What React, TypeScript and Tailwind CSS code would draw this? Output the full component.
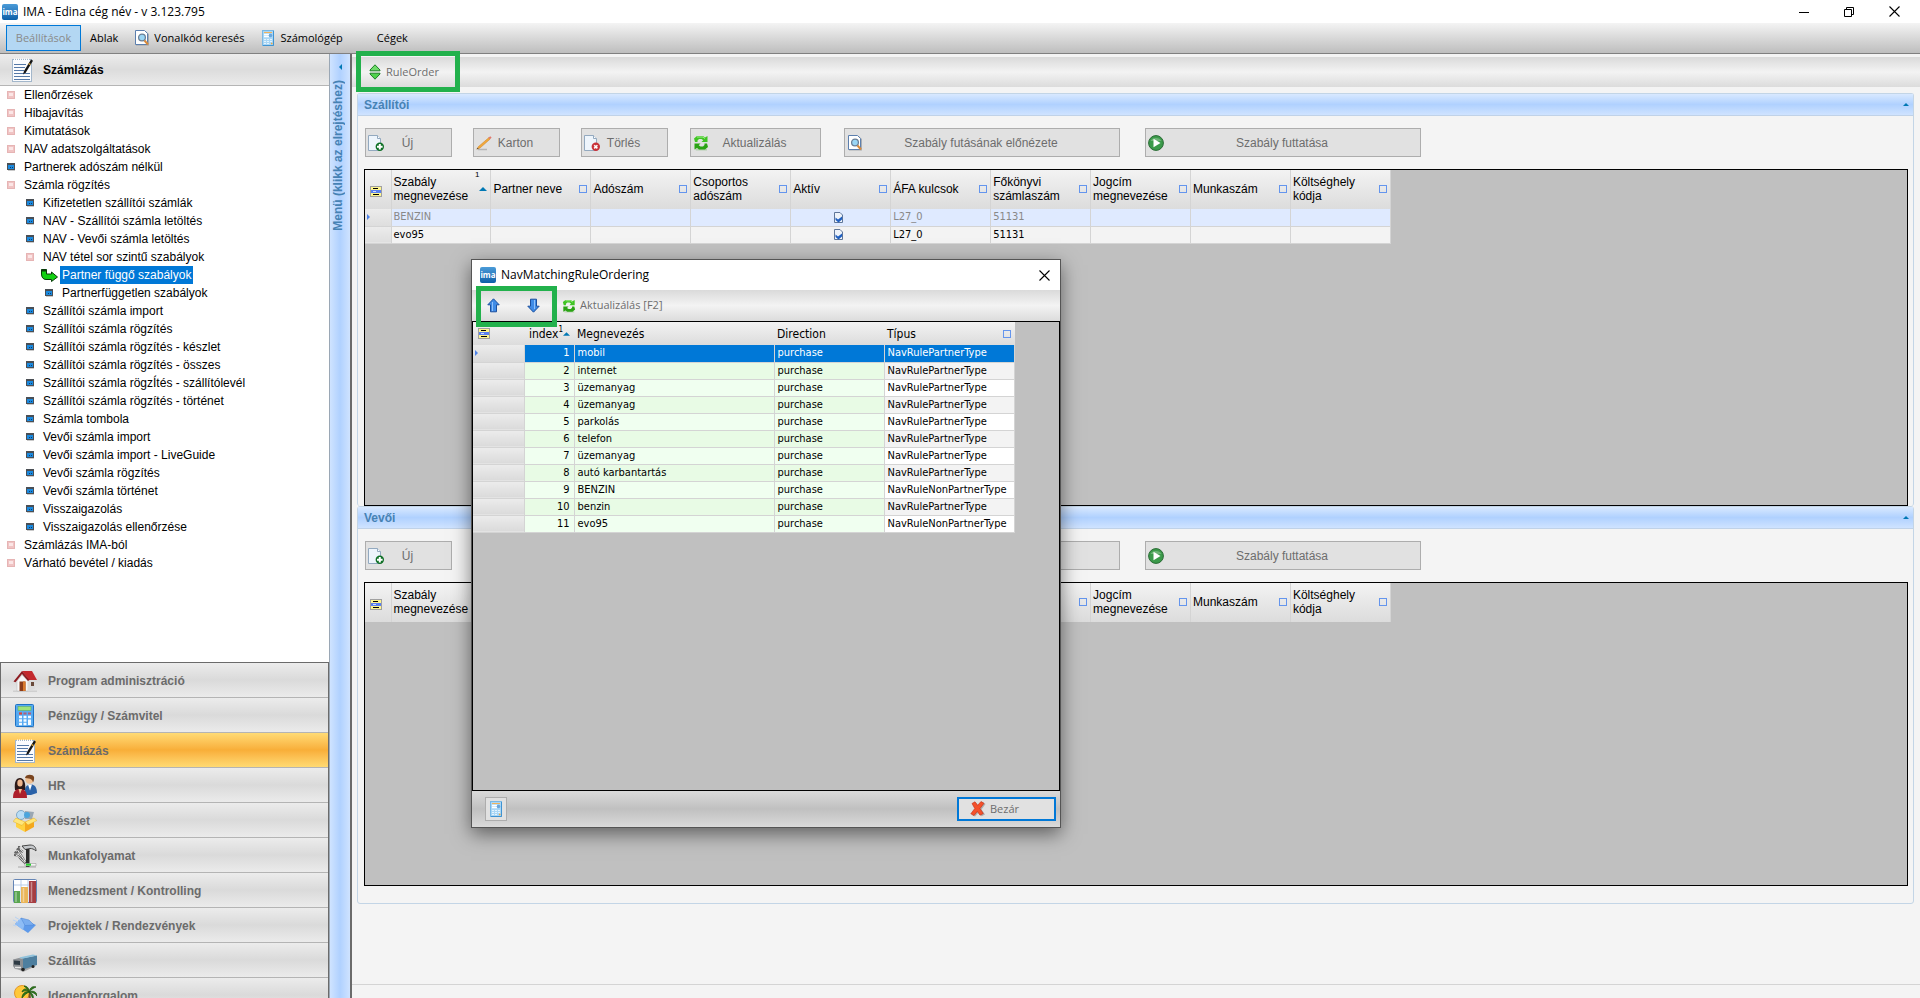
const ui = "font-['Open_Sans','Noto_Sans',sans-serif]";
const tahoma = "font-['DejaVu_Sans_Condensed','Noto_Sans',sans-serif]";

type IconProps = { className?: string };

const LogoIcon = ({ className = "size-4" }: IconProps) => (
  <span
    className={`${className} flex shrink-0 items-center justify-center overflow-hidden rounded-[2px] bg-linear-to-b from-[#4a9bd8] to-[#0a5fa8] text-[8px] leading-none font-bold text-white`}
  >
    ima
  </span>
);

const NotepadIcon = ({ className = "size-6" }: IconProps) => (
  <svg viewBox="0 0 24 24" className={className}>
    <rect x="2.5" y="1.5" width="19" height="22" fill="#fbfcfe" stroke="#a3b7cb" />
    <path d="M4 1.5h16" stroke="#fff" strokeWidth="2" strokeDasharray="1 1" />
    <path d="M4 6.5h12M4 9.5h11M4 12.5h10M4 15.5h16M4 18.5h16M4 21.5h16" stroke="#5579a8" />
    <path d="M13 16.5l1-3.5 7-11.5 2 1.2-7 11.5z" fill="#151515" />
    <path d="M18.5 5.5l2 1.2" stroke="#e0a93c" strokeWidth="1.4" />
  </svg>
);

const CalculatorIcon = ({ className = "size-6" }: IconProps) => (
  <svg viewBox="0 0 24 24" className={className}>
    <path d="M4 23l17 .8V2z" fill="#808a94" opacity=".6" />
    <rect x="2.5" y=".5" width="18" height="22" rx="1" fill="#57aaf2" stroke="#1d72c4" />
    <rect x="5" y="2.5" width="13" height="4" fill="#9ee27a" stroke="#5fa851" strokeWidth=".5" />
    <path d="M6 9.5h3" stroke="#d9473a" strokeWidth="2.2" />
    <path d="M10.5 9.5h3M15 9.5h3" stroke="#b0607a" strokeWidth="2.2" />
    <path d="M6 13h3M10.5 13h3M15 13h3M6 16.5h3M10.5 16.5h3M6 20h3M10.5 20h3" stroke="#f4faff" strokeWidth="2.3" />
    <path d="M15 15.5h3v5.5h-3z" fill="#f4faff" />
  </svg>
);

const SmallCalcIcon = ({ className = "size-4" }: IconProps) => (
  <svg viewBox="0 0 16 16" className={className}>
    <rect x="2.5" y=".5" width="11" height="15" fill="#a9d6f5" stroke="#7ab8e4" />
    <path d="M13.5 1v14.5H3" stroke="#3f93d2" fill="none" />
    <path d="M4 2.5h8" stroke="#f0b25c" />
    <path d="M4 4.5h5M4 6.5h5" stroke="#fff" strokeWidth="1.5" />
    <circle cx="10.5" cy="5.5" r="1.8" fill="#6ba6dc" />
    <path d="M4 9.5h8M4 11.5h8M4 13.5h6" stroke="#e4f3fd" strokeDasharray="2 1" />
    <path d="M11 13.5h1.5" stroke="#f0a63c" strokeWidth="1.5" />
  </svg>
);

const SearchDocIcon = ({ className = "size-4" }: IconProps) => (
  <svg viewBox="0 0 16 16" className={className}>
    <path d="M2 1h9.5l3.5 3v11.5H2z" fill="#7e858c" opacity=".55" />
    <path d="M1.5.5h9l3 3v11h-12z" fill="#fff" stroke="#5c7fae" />
    <circle cx="8" cy="7.5" r="3.4" fill="#9ad6f5" stroke="#6b7f96" strokeWidth="1.3" />
    <path d="M10.5 10.5l3.5 4" stroke="#d98a3a" strokeWidth="2" />
  </svg>
);

const SortIcon = ({ className = "h-4 w-3" }: IconProps) => (
  <svg viewBox="0 0 12 16" className={className}>
    <path d="M6 .8l5 5.2v.8H1V6z" fill="#6fdc6a" stroke="#1d7f25" />
    <path d="M6 15.2l5-5.2v-.8H1v.8z" fill="#4fd24c" stroke="#1d7f25" />
  </svg>
);

const PageIcon = ({ kind, className = "size-4" }: IconProps & { kind: "add" | "delete" }) => (
  <svg viewBox="0 0 16 16" className={className}>
    <path d="M.5.5h9l3 3v12H.5z" fill="#eef5fc" stroke="#93a9bf" />
    <path d="M9.5.5v3h3" fill="#fff" stroke="#93a9bf" />
    <circle cx="11.8" cy="11.8" r="4.2" fill={kind === "add" ? "#0f7026" : "#c8323a"} />
    {kind === "add" ? (
      <path d="M11.8 9v5.6M9 11.8h5.6" stroke="#fff" strokeWidth="2" />
    ) : (
      <path d="M10.2 10.2l3.2 3.2M13.4 10.2l-3.2 3.2" stroke="#fff" strokeWidth="1.6" />
    )}
  </svg>
);

const PencilIcon = ({ className = "size-4" }: IconProps) => (
  <svg viewBox="0 0 16 16" className={className}>
    <path d="M2 14.5h9" stroke="#b5b5b5" strokeWidth="1.5" />
    <path d="M.8 14.2l1.7-2.7L13 2.5l1.2 1.5L4 13z" fill="#f2a93b" stroke="#c87f22" strokeWidth=".5" />
    <path d="M12.5 2.8l1.7-1.6 1.4 1.4-1.7 1.7z" fill="#e2776e" />
    <path d="M.8 14.2l.9-1.5.8.9z" fill="#333" />
  </svg>
);

const RefreshIcon = ({ className = "size-4" }: IconProps) => (
  <svg viewBox="0 0 16 16" className={className}>
    <path d="M2 14h12v1.5H3z" fill="#9bc795" opacity=".6" />
    <path d="M1 3.5L4 1h6l2 1.5L14.5 1v6H8.5l1.8-1.8L8.5 4H6L4.5 5.5V7H2z" fill="#3fc423" />
    <path d="M15 12l-3 2.5H6L4 13l-2.5 1.5v-6h6l-1.8 1.8L7.500 11.500H10l1.5-1.5V8.5H14z" fill="#2aa314" />
    <path d="M4 2h6l2 1.5" stroke="#a3ee90" fill="none" />
  </svg>
);

const PlayIcon = ({ className = "size-4" }: IconProps) => (
  <svg viewBox="0 0 16 16" className={className}>
    <circle cx="8" cy="8" r="7.4" fill="#3b9a4a" stroke="#2a6b35" />
    <path d="M2.5 6a6 5 0 0 1 11 0z" fill="#8fc795" opacity=".6" />
    <path d="M5.5 3.8v8.4L12.5 8z" fill="#fff" />
  </svg>
);

const FilterIcon = () => (
  <svg viewBox="0 0 12 11" className="h-[11px] w-3">
    <rect x=".5" y=".5" width="11" height="10" fill="#fff68f" stroke="#a0a0a0" />
    <path d="M3 2.5h5M3 8.5h6" stroke="#000" />
    <path d="M1 5.5h10" stroke="#5a80f0" strokeWidth="3" />
    <path d="M3 5.5h3" stroke="#cfdcff" />
  </svg>
);

const CheckIcon = () => (
  <svg viewBox="0 0 9 11" className="h-[11px] w-[9px]">
    <path d="M.5.5h5.5l2.5 2.5v7.5h-8z" fill="#eef3fa" stroke="#5f7699" />
    <path d="M1.5 5.500l2.500 2 4-3v3L4.500 10.500l-3-2.500z" fill="#1f5fc0" />
  </svg>
);

const ArrowIcon = ({ down = false }: { down?: boolean }) => (
  <svg viewBox="0 0 13 15" className={`h-[15px] w-[13px] ${down ? "rotate-180" : ""}`}>
    <path d="M6.5.8l5.7 6H9.500v7h-6v-7H.8z" fill="#3f8be6" stroke="#1b4f9e" />
    <path d="M5.5 4v9" stroke="#8fc1fa" />
  </svg>
);

const RedXIcon = () => (
  <svg viewBox="0 0 16 16" className="size-4">
    <path d="M3 3.5L6 2l3 3.5L12.500 1l3 2-4 5.500 3.500 5-3.500 1.800L8.500 11.500 5 15.500l-3-1.500 4-5.500z" fill="#777" opacity=".5" />
    <path d="M2 2.5L5 .8l2.700 3.500L11 .5l3 1.800-4 5.200 3.300 5-3.300 1.700-2.700-3.800L4 14.500.8 12.800l4-5.300z" fill="#f4512c" stroke="#c22d12" strokeWidth=".6" />
  </svg>
);

const HouseIcon = () => (
  <svg viewBox="0 0 24 24" className="size-6">
    <path d="M0 21.5h24V23H0z" fill="#cfcfcf" />
    <path d="M4 12l5-6 6 6v10H4z" fill="#f7f7f7" stroke="#bbb" strokeWidth=".5" />
    <path d="M15 10l7 1v9l-7 2z" fill="#dcdcdc" />
    <path d="M9 2h10l5 9h-8z" fill="#c3292d" />
    <path d="M9 2L.5 12.5l2 .8L9 5l6 7 1.5-1z" fill="#8d1b20" />
    <path d="M6.5 12.5h6V22h-6z" fill="#8a3c1c" />
    <path d="M10 12.5h2.5V22H10z" fill="#d9792c" />
    <path d="M18 13h3v4h-3z" fill="#6a4a3a" />
  </svg>
);

const PeopleIcon = () => (
  <svg viewBox="0 0 24 24" className="size-6">
    <path d="M12 16c0-4 3-5.500 6-5.500s6 2 6 8.500l-6 2h-6z" fill="#2a62a8" />
    <path d="M15 10.5l2 6 2-6z" fill="#fff" />
    <circle cx="16.5" cy="5.5" r="4.2" fill="#f0bf91" />
    <path d="M12 4c0-4 8-4.500 9-1 .4 2-.5 5-1 5.500-.5-3-2-4-8-4.500z" fill="#7a4520" />
    <path d="M2 16C1 8 3 4 7 4s6 5 5 12z" fill="#2d1a18" />
    <ellipse cx="7" cy="9" rx="2.7" ry="3.5" fill="#efb78e" />
    <path d="M0 24c0-6 2-9 7-9s7 3 7 9z" fill="#ad1f2b" />
    <path d="M5.5 15L7 20l2-5z" fill="#f0bf91" />
  </svg>
);

const BoxIcon = () => (
  <svg viewBox="0 0 24 24" className="size-6">
    <circle cx="8" cy="6" r="4.5" fill="#b9ddf5" stroke="#7fa9c9" />
    <path d="M12 2l9 1-2 7h-7z" fill="#9aa7b3" />
    <circle cx="14" cy="6" r="3" fill="#4aa5dd" />
    <path d="M3 9l9 4v10l-9-5z" fill="#ffd23f" />
    <path d="M21 9l-9 4v10l9-5z" fill="#f5a81c" />
    <path d="M3 9L0 12.5l9 4 3-3.500zM21 9l3 2.500-9 4.500-3-3z" fill="#ffe67a" stroke="#d9a21e" strokeWidth=".4" />
  </svg>
);

const ToolsIcon = () => (
  <svg viewBox="0 0 24 24" className="size-6">
    <path d="M5 23h18" stroke="#bdbdbd" strokeWidth="1.5" />
    <path d="M1.5 8c3 2 5-1 3-4M4 5l9 14M1 11c4 0 5 1 6 3l6 6M6 2c0 4 2 5 4 6" stroke="#666" strokeWidth="2.2" fill="none" />
    <path d="M4.5 6l8 12M3 11.500c3 .5 4 3 9 7M7 3c0 3 2 4 3 5" stroke="#eee" fill="none" />
    <path d="M9 2l8-1c4 0 6 2 6 6-2-2-4-2.500-6-2.500l-5 1z" fill="#c6c9cc" stroke="#444" />
    <path d="M13 5h3.500v18H13z" fill="#2b2b2b" />
    <path d="M12 19.5h11V22H12z" fill="#f5f5f5" stroke="#888" strokeWidth=".5" />
    <path d="M13 20.7h5" stroke="#27d02f" strokeWidth="2" />
  </svg>
);

const ChartIcon = () => (
  <svg viewBox="0 0 24 24" className="size-6">
    <rect x=".5" y=".5" width="23" height="23" rx="1" fill="#fff" stroke="#6585b5" />
    <path d="M1 6h22M8 1v22M15 1v22" stroke="#b7cbe6" />
    <path d="M1 12h6v12H1z" fill="#5aa550" />
    <path d="M8 8h7v16H8z" fill="#eab558" />
    <path d="M16 2h7v22h-7z" fill="#a63e42" />
    <path d="M3 13v10M10.5 9v14M18.5 3v20" stroke="#fff" strokeWidth="1.5" opacity=".4" />
  </svg>
);

const EnvelopeIcon = () => (
  <svg viewBox="0 0 24 24" className="size-6">
    <path d="M2 10l6-6 15 7-8 8z" fill="#5e9aea" />
    <path d="M2 10l6-6 4 5-2 7z" fill="#8dbcf5" />
    <path d="M8 4l8 2 5 5-9 .5z" fill="#7aaef0" stroke="#4c85d4" strokeWidth=".5" />
    <path d="M0 6l5 2M2 3l5 3M0 11l3 1" stroke="#b9d3f4" />
  </svg>
);

const TruckIcon = () => (
  <svg viewBox="0 0 24 24" className="size-6">
    <path d="M2 18.5l21-1.5-13 6z" fill="#a8a8a8" />
    <path d="M9 9.5l15-3V16L10 20.5z" fill="#4e7f9f" />
    <path d="M6 8.5l14-3 4 1L9 9.8z" fill="#8fc2dc" />
    <path d="M0 10.5l6-1.5 4 1v11l-8-1-2-3z" fill="#8b8f93" />
    <path d="M1 11.5l6 .5v4l-6-.5z" fill="#2e3b45" />
    <path d="M2 18.5h6" stroke="#e8e8e8" strokeWidth="1.5" />
    <circle cx="10" cy="20.5" r="1.8" fill="#222" />
    <circle cx="20" cy="17.5" r="1.5" fill="#222" />
  </svg>
);

const PalmIcon = () => (
  <svg viewBox="0 0 24 24" className="size-6">
    <circle cx="9" cy="9" r="7.5" fill="#ffc83a" stroke="#e3962a" />
    <path d="M16 8c-1 6 0 10-2 16h3c1-6 1-10 .5-16z" fill="#7a4f22" />
    <path d="M16 8C13 3 10 5 9 8c3-2 5-1 7 0zM16 8c-5-1-7 3-7 6 2-3 5-5 7-6zM16 8c0-5-3-6-5-6 2 2 4 3 5 6zM16 8c1-5 4-6 7-5-3 1-5 3-7 5zM16 8c4-2 8 0 8 4-2-3-5-4-8-4zM16 8c4 1 5 5 4 8-1-4-2-6-4-8z" fill="#2f7a1c" stroke="#1f5a12" strokeWidth=".8" />
  </svg>
);

const CloseIcon = () => (
  <svg viewBox="0 0 11 11" className="size-[11px]">
    <path d="M.5.5l10 10M10.5.5l-10 10" stroke="#000" strokeWidth="1.1" />
  </svg>
);

type TreeItem = { label: string; level: number; kind: "group" | "leaf" | "active" };

const tree: TreeItem[] = [
  { label: "Ellenőrzések", level: 0, kind: "group" },
  { label: "Hibajavítás", level: 0, kind: "group" },
  { label: "Kimutatások", level: 0, kind: "group" },
  { label: "NAV adatszolgáltatások", level: 0, kind: "group" },
  { label: "Partnerek adószám nélkül", level: 0, kind: "leaf" },
  { label: "Számla rögzítés", level: 0, kind: "group" },
  { label: "Kifizetetlen szállítói számlák", level: 1, kind: "leaf" },
  { label: "NAV - Szállítói számla letöltés", level: 1, kind: "leaf" },
  { label: "NAV - Vevői számla letöltés", level: 1, kind: "leaf" },
  { label: "NAV tétel sor szintű szabályok", level: 1, kind: "group" },
  { label: "Partner függő szabályok", level: 2, kind: "active" },
  { label: "Partnerfüggetlen szabályok", level: 2, kind: "leaf" },
  { label: "Szállítói számla import", level: 1, kind: "leaf" },
  { label: "Szállítói számla rögzítés", level: 1, kind: "leaf" },
  { label: "Szállítói számla rögzítés - készlet", level: 1, kind: "leaf" },
  { label: "Szállítói számla rögzítés - összes", level: 1, kind: "leaf" },
  { label: "Szállítói számla rögzÍtés - szállítólevél", level: 1, kind: "leaf" },
  { label: "Szállítói számla rögzítés - történet", level: 1, kind: "leaf" },
  { label: "Számla tombola", level: 1, kind: "leaf" },
  { label: "Vevői számla import", level: 1, kind: "leaf" },
  { label: "Vevői számla import - LiveGuide", level: 1, kind: "leaf" },
  { label: "Vevői számla rögzítés", level: 1, kind: "leaf" },
  { label: "Vevői számla történet", level: 1, kind: "leaf" },
  { label: "Visszaigazolás", level: 1, kind: "leaf" },
  { label: "Visszaigazolás ellenőrzése", level: 1, kind: "leaf" },
  { label: "Számlázás IMA-ból", level: 0, kind: "group" },
  { label: "Várható bevétel / kiadás", level: 0, kind: "group" },
];

const levelPadding = ["pl-[7px]", "pl-[26px]", "pl-[45px]"];

const modules = [
  { label: "Program adminisztráció", icon: <HouseIcon /> },
  { label: "Pénzügy / Számvitel", icon: <CalculatorIcon /> },
  { label: "Számlázás", icon: <NotepadIcon /> },
  { label: "HR", icon: <PeopleIcon /> },
  { label: "Készlet", icon: <BoxIcon /> },
  { label: "Munkafolyamat", icon: <ToolsIcon /> },
  { label: "Menedzsment / Kontrolling", icon: <ChartIcon /> },
  { label: "Projektek / Rendezvények", icon: <EnvelopeIcon /> },
  { label: "Szállítás", icon: <TruckIcon /> },
  { label: "Idegenforgalom", icon: <PalmIcon /> },
];

const columns = [
  "Szabály megnevezése",
  "Partner neve",
  "Adószám",
  "Csoportos adószám",
  "Aktív",
  "ÁFA kulcsok",
  "Főkönyvi számlaszám",
  "Jogcím megnevezése",
  "Munkaszám",
  "Költséghely kódja",
];

type Rule = { name: string; vat: string; ledger: string };

const supplierRules: Rule[] = [
  { name: "BENZIN", vat: "L27_0", ledger: "51131" },
  { name: "evo95", vat: "L27_0", ledger: "51131" },
];

const ordering = [
  ["mobil", "NavRulePartnerType"],
  ["internet", "NavRulePartnerType"],
  ["üzemanyag", "NavRulePartnerType"],
  ["üzemanyag", "NavRulePartnerType"],
  ["parkolás", "NavRulePartnerType"],
  ["telefon", "NavRulePartnerType"],
  ["üzemanyag", "NavRulePartnerType"],
  ["autó karbantartás", "NavRulePartnerType"],
  ["BENZIN", "NavRuleNonPartnerType"],
  ["benzin", "NavRulePartnerType"],
  ["evo95", "NavRuleNonPartnerType"],
];

const TreeBullet = ({ kind }: { kind: TreeItem["kind"] }) => {
  if (kind === "active") {
    return (
      <svg viewBox="0 0 17 13" className="-ml-1 h-[13px] w-[17px] shrink-0">
        <path d="M.5.5h5v4.500h5V3l6 5-6 4.500v-2H5C2 10.500.5 8 .5 5z" fill="#12d012" stroke="#0b3d0b" />
        <path d="M.5.5h5v2h-5z" fill="#0b3d0b" />
      </svg>
    );
  }
  return kind === "group" ? (
    <svg viewBox="0 0 8 8" className="size-2 shrink-0">
      <path d="M0 0h8v8H0z" fill="#e6b4b4" />
      <path d="M1 1h6v6H1z" fill="#f0c4c4" />
      <path d="M2 2h4v3H2z" fill="#fbe6e6" />
    </svg>
  ) : (
    <svg viewBox="0 0 8 8" className="size-2 shrink-0">
      <path d="M0 0h8v7H0z" fill="#4a4f55" />
      <path d="M1 7h7v1H1z" fill="#c9c9c9" />
      <path d="M1 2h6v4H1z" fill="#1a8ae0" />
      <path d="M3 4h1v1H3zM5 4h1v1H5z" fill="#0c3f70" />
    </svg>
  );
};

const Sidebar = () => (
  <aside className="flex w-[329px] shrink-0 flex-col bg-white font-['Liberation_Sans',Arial,sans-serif] text-xs">
    <h2 className="flex h-8 shrink-0 items-center gap-[9px] border-b border-[#b5b5b5] bg-linear-to-b from-[#ececec] via-[#dcdcdc] to-[#ebebeb] pl-2.5 font-bold">
      <NotepadIcon />
      Számlázás
    </h2>
    <ul className="min-h-0 flex-1 overflow-hidden">
      {tree.map((item, i) => (
        <li key={i} className={`flex h-[18px] items-center ${levelPadding[item.level]}`}>
          <TreeBullet kind={item.kind} />
          <a
            href="#"
            className={
              item.kind === "active"
                ? "ml-0.5 bg-[#0078d7] px-0.5 leading-[18px] text-white"
                : "ml-[9px]"
            }
          >
            {item.label}
          </a>
        </li>
      ))}
    </ul>
    <nav className="h-[336px] shrink-0 overflow-hidden border-x border-t border-[#6b6b6b]">
      {modules.map((m) => (
        <button
          key={m.label}
          className={`flex h-[35px] w-full items-center gap-[11px] border-b border-[#b4b4b4] bg-linear-to-b pt-0.5 pl-3 font-bold text-[#6b6b6b] ${
            m.label === "Számlázás"
              ? "from-[#ffdb74] via-[#f8ae38] to-[#ffda72]"
              : "from-[#ececec] via-[#dadada] to-[#ebebeb]"
          }`}
        >
          {m.icon}
          {m.label}
        </button>
      ))}
    </nav>
  </aside>
);

const ActionButton = ({
  icon,
  label,
  width,
}: {
  icon: React.ReactNode;
  label: string;
  width: string;
}) => (
  <button
    className={`flex h-[29px] shrink-0 items-center border border-[#adadad] bg-[#e1e1e1] pl-0.5 text-[#6d6d6d] ${width}`}
  >
    {icon}
    <span className="flex-1 pr-5 text-center">{label}</span>
  </button>
);

const RulePanel = ({
  title,
  rules,
  className,
  gridHeight,
}: {
  title: string;
  rules: Rule[];
  className: string;
  gridHeight: string;
}) => (
  <section
    className={`rounded-[3px] border-x border-t border-[#c3d5e6] font-['Liberation_Sans',Arial,sans-serif] text-xs ${className}`}
  >
    <h3 className="flex h-[22px] items-center justify-between border-b border-[#c0d2e8] bg-linear-to-b from-[#d9e9ff] via-[#b0d1ff] to-[#cfe3ff] pr-1 pl-1.5 font-bold text-[#4682b4]">
      {title}
      <button aria-label={`${title} összecsukása`}>
        <svg viewBox="0 0 6 3" className="h-[3px] w-1.5">
          <path d="M0 3l3-3 3 3z" fill="#0078b4" />
        </svg>
      </button>
    </h3>
    <div className="flex px-[7px] py-3">
      <ActionButton icon={<PageIcon kind="add" />} label="Új" width="mr-[21px] w-[87px]" />
      <ActionButton icon={<PencilIcon />} label="Karton" width="mr-[21px] w-[87px]" />
      <ActionButton icon={<PageIcon kind="delete" />} label="Törlés" width="mr-[22px] w-[87px]" />
      <ActionButton icon={<RefreshIcon />} label="Aktualizálás" width="mr-[23px] w-[131px]" />
      <ActionButton
        icon={<SearchDocIcon />}
        label="Szabály futásának előnézete"
        width="mr-[25px] w-[276px]"
      />
      <ActionButton icon={<PlayIcon />} label="Szabály futtatása" width="w-[276px]" />
    </div>
    <div className={`mr-[5px] ml-1.5 overflow-hidden border border-black bg-[#c0c0c0] ${gridHeight}`}>
      <table className="w-[1026px] table-fixed border-collapse">
        <thead>
          <tr className="h-[39px] bg-linear-to-b from-[#f3f3f3] to-[#dcdcdc]">
            <th className="w-[26px] border-r border-[#d4d4d4] pt-1 pl-[5px]">
              <FilterIcon />
            </th>
            {columns.map((c, i) => (
              <th
                key={c}
                className="border-r border-[#d4d4d4] p-0 pr-[3px] pb-0.5 pl-0.5 text-left leading-[14px] font-normal"
              >
                <div className="relative flex items-center justify-between">
                  <span>{c}</span>
                  {i === 0 && rules.length > 0 ? (
                    <>
                      <span className="absolute -top-1 right-2 text-[8px] leading-none">1</span>
                      <svg viewBox="0 0 8 4" className="h-1 w-2 shrink-0">
                        <path d="M0 4l4-4 4 4z" fill="#0078b4" />
                      </svg>
                    </>
                  ) : (
                    <span className="size-2 shrink-0 border border-[#6495ed]" />
                  )}
                </div>
              </th>
            ))}
          </tr>
        </thead>
        <tbody className={`text-[11px] ${tahoma}`}>
          {rules.map((r, i) => (
            <tr
              key={r.name}
              className={`h-[17px] leading-4 ${i === 0 ? "bg-[#dfeaff] text-[#888]" : "bg-[#f3f3f3]"}`}
            >
              <td className="border-r border-b border-[#d4d4d4] bg-linear-to-b from-[#ececec] to-[#dedede] p-0 pl-0.5">
                {i === 0 && (
                  <svg viewBox="0 0 3 6" className="h-1.5 w-[3px]">
                    <path d="M0 0l3 3-3 3z" fill="#4f83e8" />
                  </svg>
                )}
              </td>
              {columns.map((c) => (
                <td key={c} className="border-r border-b border-[#d4d4d4] p-0 pl-0.5">
                  {c === "Szabály megnevezése" && r.name}
                  {c === "Aktív" && (
                    <div className="flex justify-center pr-1.5">
                      <CheckIcon />
                    </div>
                  )}
                  {c === "ÁFA kulcsok" && r.vat}
                  {c === "Főkönyvi számlaszám" && r.ledger}
                </td>
              ))}
            </tr>
          ))}
        </tbody>
      </table>
    </div>
  </section>
);

const OrderingDialog = () => (
  <div
    role="dialog"
    aria-label="NavMatchingRuleOrdering"
    className={`absolute top-[259px] left-[471px] flex h-[569px] w-[590px] flex-col border border-[#555] bg-white text-xs shadow-[0_6px_18px_rgba(0,0,0,0.5)] ${ui}`}
  >
    <div className="flex h-[30px] shrink-0 items-center justify-between pr-2.5 pl-2">
      <div className="flex items-center gap-[5px]">
        <LogoIcon />
        <span>NavMatchingRuleOrdering</span>
      </div>
      <button aria-label="Bezárás">
        <CloseIcon />
      </button>
    </div>
    <div className="flex h-[31px] shrink-0 items-center bg-linear-to-b from-[#dadada] via-[#f3f3f3] to-[#dcdcdc] text-[11px] text-[#6d6d6d]">
      <button aria-label="Fel" className="ml-[15px]">
        <ArrowIcon />
      </button>
      <button aria-label="Le" className="ml-[27px]">
        <ArrowIcon down />
      </button>
      <button className="ml-[22px] flex items-center gap-1">
        <RefreshIcon className="size-3.5" />
        Aktualizálás [F2]
      </button>
    </div>
    <div className={`min-h-0 flex-1 border border-black bg-[#c0c0c0] text-[11px] ${tahoma}`}>
      <table className="w-[542px] table-fixed border-collapse">
        <thead>
          <tr className="h-[23px] bg-linear-to-b from-[#f3f3f3] to-[#dcdcdc] text-left text-xs">
            <th className="w-[51px] p-0 pl-[5px]">
              <FilterIcon />
            </th>
            <th className="w-[50px] p-0 font-normal">
              <div className="flex items-center justify-end pr-1">
                index<sup className="text-[8px]">1</sup>
                <svg viewBox="0 0 8 4" className="h-1 w-[7px]">
                  <path d="M0 4l4-4 4 4z" fill="#0078b4" />
                </svg>
              </div>
            </th>
            <th className="w-[200px] p-0 pl-[3px] font-normal">Megnevezés</th>
            <th className="w-[110px] p-0 pl-[3px] font-normal">Direction</th>
            <th className="p-0 pr-1 pl-[3px] font-normal">
              <div className="flex items-center justify-between">
                Típus
                <span className="size-2 border border-[#6495ed]" />
              </div>
            </th>
          </tr>
        </thead>
        <tbody>
          {ordering.map(([name, type], i) => {
            const key = i === 0 ? "bg-[#0078d7] text-white" : i % 2 ? "bg-[#e8fbe5]" : "bg-[#f0fff0]";
            const last = i === 0 ? "bg-[#0078d7] text-white" : i % 2 ? "bg-[#f3f3f3]" : "bg-white";
            const cell = "border-r border-b border-[#d4d4d4] p-0";
            return (
              <tr key={i} className="h-[17px] leading-4">
                <td className={`${cell} bg-linear-to-b from-[#ececec] to-[#dadada] pl-0.5`}>
                  {i === 0 && (
                    <svg viewBox="0 0 3 6" className="h-1.5 w-[3px]">
                      <path d="M0 0l3 3-3 3z" fill="#4f83e8" />
                    </svg>
                  )}
                </td>
                <td className={`${cell} ${key} pr-1 text-right`}>{i + 1}</td>
                <td className={`${cell} ${key} pl-[3px]`}>{name}</td>
                <td className={`${cell} ${key} pl-[3px]`}>purchase</td>
                <td className={`${cell} ${last} pl-[3px]`}>{type}</td>
              </tr>
            );
          })}
        </tbody>
      </table>
    </div>
    <div className="flex h-[36px] shrink-0 items-center justify-between bg-linear-to-b from-[#dadada] via-[#c0c0c0] to-[#dadada] pr-1 pl-[13px] text-[11px] text-[#6d6d6d]">
      <button
        aria-label="Számológép"
        className="flex h-6 w-[22px] items-center justify-center border border-[#adadad] bg-[#e1e1e1]"
      >
        <SmallCalcIcon />
      </button>
      <button className="flex h-6 w-[99px] items-center gap-1 border-2 border-[#0078d7] bg-[#e1e1e1] pl-[11px]">
        <RedXIcon />
        Bezár
      </button>
    </div>
    <div className="pointer-events-none absolute top-[26px] left-1 h-[41px] w-[81px] border-5 border-[#22b14c]" />
  </div>
);

export default function App() {
  return (
    <div className={`relative flex h-screen flex-col overflow-hidden bg-[#f4f4f4] text-xs text-black ${ui}`}>
      <header className="flex h-[23px] shrink-0 items-center justify-between bg-white pr-5 pl-0.5">
        <div className="flex items-center gap-[5px]">
          <LogoIcon />
          <span>IMA - Edina cég név - v 3.123.795</span>
        </div>
        <div className="flex items-center gap-[35px]">
          <button aria-label="Kis méret">
            <svg viewBox="0 0 10 10" className="size-2.5">
              <path d="M0 5.5h10" stroke="#000" />
            </svg>
          </button>
          <button aria-label="Előző méret">
            <svg viewBox="0 0 10 10" className="size-2.5">
              <path d="M.5 2.5h7v7h-7zM2.5 2.5v-2h7v7h-2" fill="none" stroke="#000" />
            </svg>
          </button>
          <button aria-label="Bezárás">
            <CloseIcon />
          </button>
        </div>
      </header>

      <nav className="flex h-[31px] shrink-0 items-center border-b border-[#808080] bg-linear-to-b from-[#f4f4f4] to-[#bebebe] pl-1.5 text-[11px]">
        <button className="h-[26px] w-[75px] border border-[#0078d7] bg-[#b3d7f3] text-[#8a8a8a]">
          Beállítások
        </button>
        <button className="ml-[9px]">Ablak</button>
        <button className="ml-4 flex items-center gap-1">
          <SearchDocIcon />
          Vonalkód keresés
        </button>
        <button className="ml-4 flex items-center gap-1">
          <SmallCalcIcon />
          Számológép
        </button>
        <button className="ml-[34px]">Cégek</button>
      </nav>

      <div className="flex min-h-0 flex-1">
        <Sidebar />
        <button className="flex w-[23px] shrink-0 flex-col items-center border-r-2 border-l border-[#6b6b6b] border-l-[#9aa7b5] bg-linear-to-r from-[#cfe3ff] via-[#b0d1ff] to-[#cfe3ff] pt-2.5 font-['Liberation_Sans',Arial,sans-serif] font-bold text-[#4682b4]">
          <svg viewBox="0 0 3 6" className="h-1.5 w-[3px]">
            <path d="M3 0L0 3l3 3z" fill="#0078b4" />
          </svg>
          <span className="mt-2.5 mr-1 rotate-180 leading-4 whitespace-nowrap [writing-mode:vertical-rl]">
            Menü (klikk az elrejtéshez)
          </span>
        </button>

        <main className="flex min-w-0 flex-1 flex-col">
          <div className="relative mt-[3px] flex h-[30px] shrink-0 items-center bg-linear-to-b from-[#dadada] via-[#f3f3f3] to-[#dcdcdc] pl-[17px]">
            <button className="flex items-center gap-[5px] text-[11px] text-[#6d6d6d]">
              <SortIcon />
              RuleOrder
            </button>
            <div className="pointer-events-none absolute -top-1.5 left-1 h-[41px] w-[104px] border-5 border-[#22b14c]" />
          </div>
          <div className="flex-1 pt-1.5 pr-1.5 pl-[5px]">
            <RulePanel title="Szállítói" rules={supplierRules} className="" gridHeight="h-[337px]" />
            <RulePanel title="Vevői" rules={[]} className="border-b pb-[17px]" gridHeight="h-[304px]" />
          </div>
          <footer className="h-3.5 shrink-0 border-t border-[#d4d4d4]" />
        </main>
      </div>

      <OrderingDialog />
    </div>
  );
}
